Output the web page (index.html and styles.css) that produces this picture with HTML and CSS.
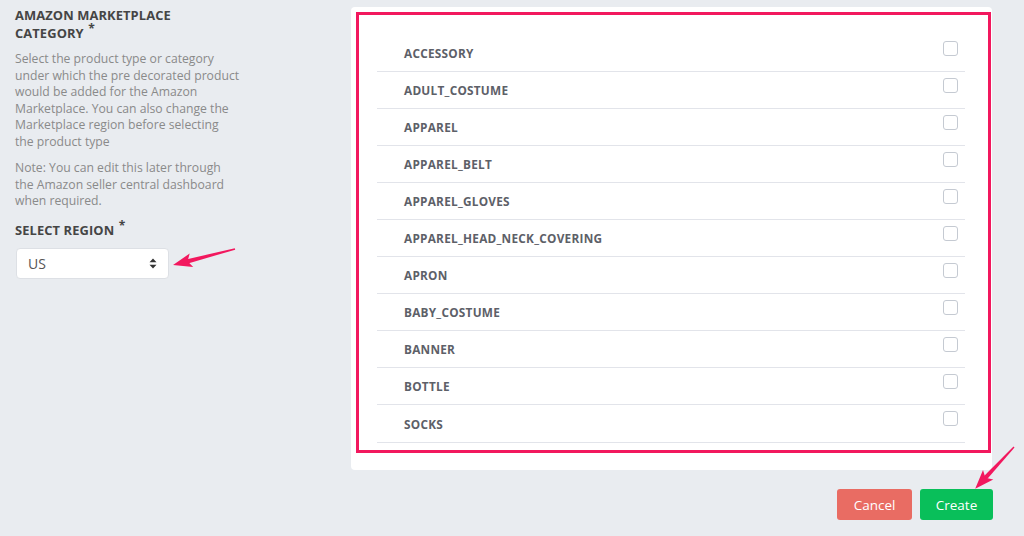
FILE: index.html
```html
<!DOCTYPE html>
<html>
<head>
<meta charset="utf-8">
<link rel="stylesheet" href="styles.css">
</head>
<body>
<div class="page">
  <aside class="side">
    <h2 class="label">AMAZON MARKETPLACE<br>CATEGORY <sup class="req">*</sup></h2>
    <p class="desc">Select the product type or category<br>under which the pre decorated product<br>would be added for the Amazon<br>Marketplace. You can also change the<br>Marketplace region before selecting<br>the product type</p>
    <p class="desc">Note: You can edit this later through<br>the Amazon seller central dashboard<br>when required.</p>
    <h2 class="label region">SELECT REGION <sup class="req">*</sup></h2>
    <div class="select">
      <span>US</span>
      <svg class="caret" width="8" height="11" viewBox="0 0 8 11"><path d="M4 0.5 L7.5 4.2 H0.5 Z M4 10.5 L7.5 6.8 H0.5 Z" fill="#333"/></svg>
    </div>
  </aside>
  <main class="main">
    <section class="card">
      <div class="frame">
        <ul class="list">
          <li class="row"><span>ACCESSORY</span><i class="check"></i></li>
          <li class="row"><span>ADULT_COSTUME</span><i class="check"></i></li>
          <li class="row"><span>APPAREL</span><i class="check"></i></li>
          <li class="row"><span>APPAREL_BELT</span><i class="check"></i></li>
          <li class="row"><span>APPAREL_GLOVES</span><i class="check"></i></li>
          <li class="row"><span>APPAREL_HEAD_NECK_COVERING</span><i class="check"></i></li>
          <li class="row"><span>APRON</span><i class="check"></i></li>
          <li class="row"><span>BABY_COSTUME</span><i class="check"></i></li>
          <li class="row"><span>BANNER</span><i class="check"></i></li>
          <li class="row"><span>BOTTLE</span><i class="check"></i></li>
          <li class="row"><span>SOCKS</span><i class="check"></i></li>
        </ul>
      </div>
    </section>
    <div class="actions">
      <button class="btn cancel">Cancel</button>
      <button class="btn create">Create</button>
    </div>
  </main>
</div>
<svg class="annot" width="1024" height="536" viewBox="0 0 1024 536">
  <g transform="translate(235 249) rotate(165.5)" fill="#f2185e">
    <polygon points="0,-0.7 50,-2.2 50,2.2 0,0.7"/>
    <polygon points="45,-7 64,0 45,7 49,0"/>
  </g>
  <g transform="translate(1014 447) rotate(132.9)" fill="#f2185e">
    <polygon points="0,-0.7 43,-2.2 43,2.2 0,0.7"/>
    <polygon points="38,-7 57,0 38,7 42,0"/>
  </g>
</svg>
</body>
</html>
```
FILE: styles.css
```css
html, body {
  margin: 0;
  padding: 0;
}
body {
  background: #e9ecf0;
  font-family: "Open Sans", "Liberation Sans", sans-serif;
  width: 1024px;
  height: 536px;
  overflow: hidden;
  position: relative;
}
.page {
  display: flex;
  align-items: flex-start;
}
.side {
  width: 230px;
  padding: 6px 0 0 15px;
  box-sizing: content-box;
}
.label {
  margin: 0;
  font-size: 12.9px;
  font-weight: 700;
  line-height: 18px;
  color: #454545;
  letter-spacing: 0.1px;
}
.req {
  font-size: 12px;
  line-height: 0;
  vertical-align: 0;
  position: relative;
  top: -5px;
  margin-left: 1px;
}
.desc {
  margin: 9px 0 0 0;
  font-size: 12.2px;
  line-height: 16.5px;
  color: #8a8a8a;
  white-space: nowrap;
}
.desc + .desc {
  margin-top: 10px;
}
.region {
  margin-top: 11px;
}
.select {
  margin-top: 9px;
  margin-left: 1px;
  width: 153px;
  height: 31px;
  box-sizing: border-box;
  background: #fff;
  border: 1px solid #dde0e5;
  border-radius: 4px;
  display: flex;
  align-items: center;
  justify-content: space-between;
  padding: 0 11px 0 11px;
  font-size: 14px;
  color: #555;
}
.main {
  margin-left: 106px;
  padding-top: 7px;
  width: 641px;
}
.card {
  background: #fff;
  border-radius: 4px;
  padding: 5px 1px 17px 5px;
}
.frame {
  border: 3px solid #f2185e;
  padding: 20px 23px 7px 18px;
}
.list {
  list-style: none;
  margin: 0;
  padding: 0;
}
.row {
  height: 37px;
  box-sizing: border-box;
  border-bottom: 1px solid #e2e4ea;
  display: flex;
  justify-content: space-between;
  align-items: center;
  padding: 0 7px 0 27px;
  font-size: 11.8px;
  font-weight: 700;
  color: #5d6068;
  letter-spacing: 0.25px;
}
.row:last-child {
  height: 38px;
}
.check {
  width: 15px;
  height: 15px;
  box-sizing: border-box;
  border: 1.5px solid #c5cad2;
  border-radius: 3px;
  align-self: flex-start;
  margin-top: 6px;
}
.actions {
  display: flex;
  justify-content: flex-end;
  gap: 8px;
  margin-top: 19px;
  margin-right: -1px;
}
.btn {
  height: 31px;
  border: none;
  border-radius: 3px;
  color: #fff;
  font-family: "Open Sans", "Liberation Sans", sans-serif;
  font-size: 13.5px;
  padding: 0;
}
.cancel {
  width: 75px;
  background: #e96c63;
}
.create {
  width: 73px;
  background: #09bf5a;
}
.annot {
  position: absolute;
  left: 0;
  top: 0;
  pointer-events: none;
}
```
